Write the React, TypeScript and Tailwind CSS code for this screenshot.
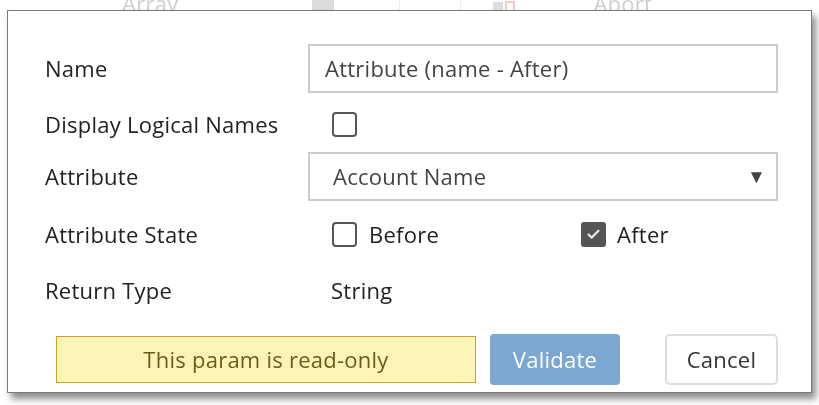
import { Check } from "lucide-react";

const font = { fontFamily: '"Open Sans", "Noto Sans", sans-serif' };

function Box({ checked }: { checked?: boolean }) {
	return checked ? (
		<span className="flex h-[25px] w-[25px] items-center justify-center rounded-[3px] bg-[#555555]">
			<Check size={15} strokeWidth={3.5} className="text-[#e6e6e6]" />
		</span>
	) : (
		<span className="block h-[25px] w-[25px] rounded-[4px] border-2 border-[#555555] bg-white" />
	);
}

function Label({ children }: { children: React.ReactNode }) {
	return <div className="w-[263px] shrink-0 text-[#222222]">{children}</div>;
}

export default function App() {
	return (
		<div
			className="relative h-[405px] w-[819px] overflow-hidden bg-white text-[22px] tracking-[0.25px]"
			style={font}
		>
			{/* blurred page behind the dialog */}
			<div className="flex h-[10px] items-end text-[22px] leading-none text-[#cfcfcf] blur-[0.6px]">
				<span className="ml-[122px] translate-y-[4px]">Array</span>
				<span className="ml-[134px] h-[10px] w-[22px] bg-[#dcdcdc]" />
				<span className="ml-[65px] h-[10px] w-px bg-[#eeeeee]" />
				<span className="ml-[60px] h-[10px] w-px bg-[#eeeeee]" />
				<span className="ml-[32px] h-[8px] w-[10px] bg-[#dddddd]" />
				<span className="ml-[2px] h-[9px] w-[10px] border-2 border-b-0 border-[#f3c9c9]" />
				<span className="ml-[78px] translate-y-[4px]">Abort</span>
			</div>

			<div className="absolute left-[7px] top-[10px] flex h-[383px] w-[805px] flex-col border border-[#7a7a7a] bg-white pl-[37px] pr-[33px] pt-[32px] shadow-[4px_6px_7px_rgba(0,0,0,0.45)]">
				<div className="flex h-[49px] items-center pt-[2px]">
					<Label>Name</Label>
					<div className="flex h-[49px] flex-1 items-center border-2 border-[#cccccc] pl-[15px] text-[#444444]">
						Attribute (name - After)
					</div>
				</div>

				<div className="flex h-[60px] items-center pt-[4px]">
					<Label>Display Logical Names</Label>
					<span className="ml-[24px]">
						<Box />
					</span>
				</div>

				<div className="flex h-[49px] items-center">
					<Label>Attribute</Label>
					<div className="flex h-[49px] flex-1 items-center justify-between border-2 border-[#cccccc] pl-[23px] pr-[10px] text-[#444444]">
						<span>Account Name</span>
						<span className="text-[19px] text-[#444444]">▼</span>
					</div>
				</div>

				<div className="flex h-[66px] items-center">
					<Label>Attribute State</Label>
					<div className="ml-[24px] flex w-[249px] items-center gap-[12px] text-[#222222]">
						<Box />
						<span>Before</span>
					</div>
					<div className="flex items-center gap-[11px] text-[#222222]">
						<Box checked />
						<span>After</span>
					</div>
				</div>

				<div className="flex h-[46px] items-center">
					<Label>Return Type</Label>
					<span className="ml-[23px] text-[#222222]">String</span>
				</div>

				<div className="mt-[21px] flex h-[51px] items-center">
					<div className="ml-[11px] flex h-[47px] w-[420px] items-center justify-center border border-[#c9a21f] bg-[#fcf4b6] text-[#6e5b1c]">
						This param is read-only
					</div>
					<button className="ml-[14px] h-[51px] w-[130px] rounded-[4px] bg-[#7ba7d0] text-white">
						Validate
					</button>
					<button className="ml-auto h-[51px] w-[113px] rounded-[5px] border-2 border-[#dddddd] bg-white text-[#333333]">
						Cancel
					</button>
				</div>
			</div>
		</div>
	);
}
